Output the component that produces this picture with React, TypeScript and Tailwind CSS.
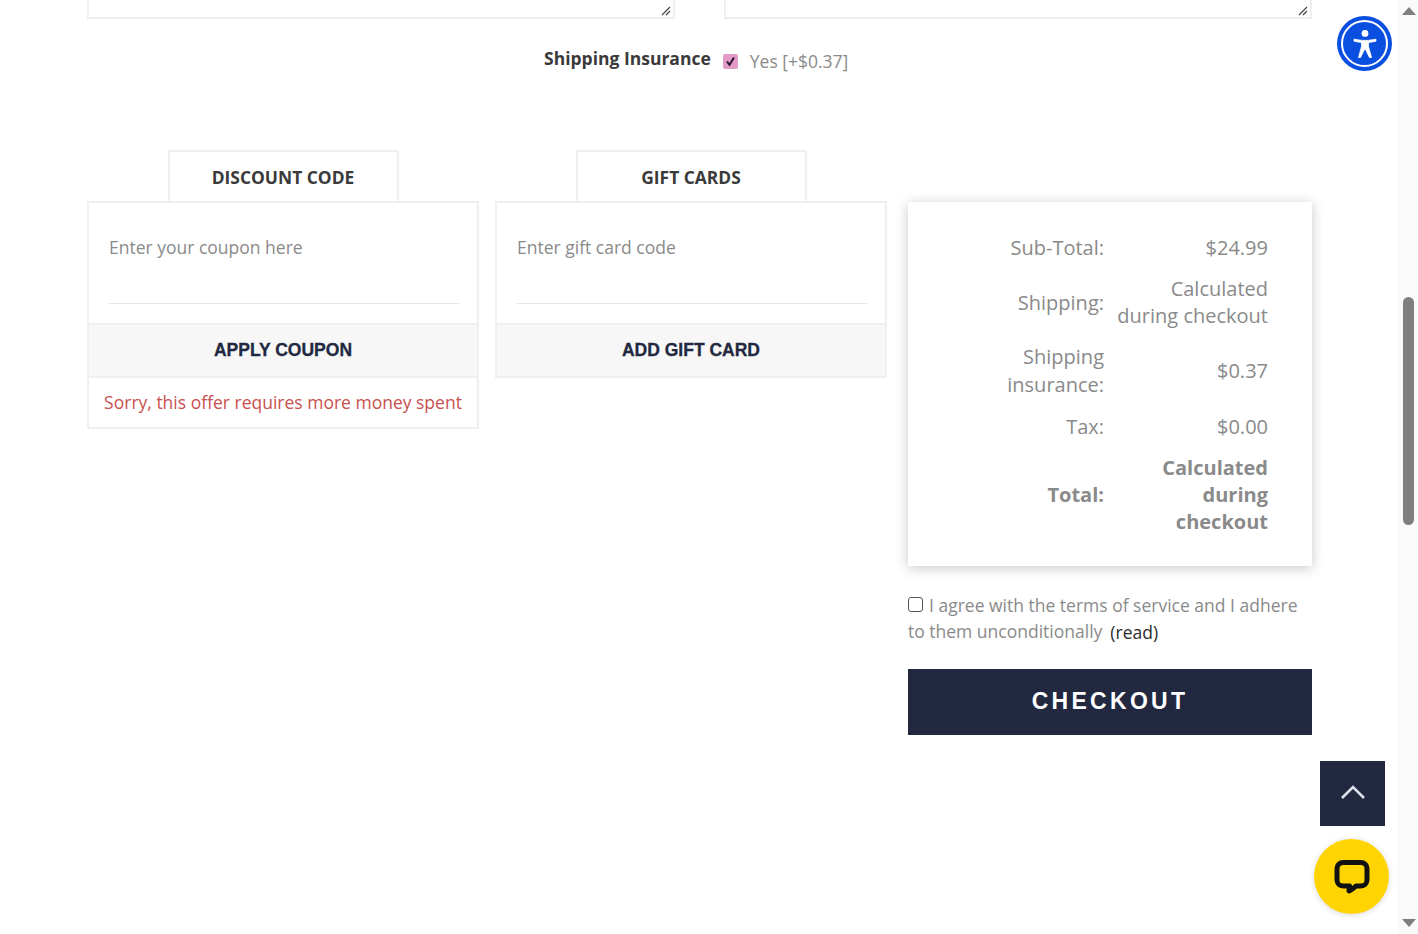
const font = "font-['Open_Sans',sans-serif]";

const CodeBox = ({
  tab,
  placeholder,
  action,
  error,
}: {
  tab: string;
  placeholder: string;
  action: string;
  error?: string;
}) => (
  <div className="w-[392px] flex flex-col items-center">
    <div className="w-[231px] h-[52px] -mb-px pt-[1px] flex items-center justify-center border-2 border-b-0 border-[#efefef] text-[17.4px] font-bold text-[#3a3a3a]">
      {tab}
    </div>
    <div className="w-full border-2 border-[#efefef] bg-white">
      <div className="h-[120px] pl-[20px] pr-[18px] pt-[30px]">
        <div className="h-[71px] border-b border-[#e4e4e4] text-[17.5px] leading-[28px] text-[#8a8a8a]">
          {placeholder}
        </div>
      </div>
      <div className="h-[53px] flex items-center justify-center bg-[#f7f7f8] border-t-2 border-[#efefef] font-['Liberation_Sans',sans-serif] font-bold text-[17.5px] [-webkit-text-stroke:0.3px_#212840] text-[#212840]">
        {action}
      </div>
      {error && (
        <div className="h-[51px] flex items-center justify-center border-t-2 border-[#efefef] text-[17.5px] text-[#c9504f]">
          {error}
        </div>
      )}
    </div>
  </div>
);

const SummaryRow = ({
  label,
  value,
  bold,
  className,
}: {
  label: React.ReactNode;
  value: React.ReactNode;
  bold?: boolean;
  className?: string;
}) => (
  <div
    className={`flex items-center text-[20px] text-[#8a8a8a] ${
      bold ? "font-bold" : ""
    } ${className ?? "leading-[27px]"}`}
  >
    <div className="w-[196px] text-right">{label}</div>
    <div className="w-[164px] text-right">{value}</div>
  </div>
);

export default function App() {
  return (
    <div className={`relative h-[934px] w-[1418px] overflow-hidden bg-white ${font}`}>
      <div className="w-[1397px] pl-[87px] pr-[85px]">
        <div className="flex justify-between">
          {[0, 1].map((i) => (
            <div
              key={i}
              className="relative h-[19px] w-[588px] border-2 border-t-0 border-[#efefef]"
            >
              <svg
                className="absolute right-[2px] bottom-[1px]"
                width="10"
                height="10"
                viewBox="0 0 10 10"
              >
                <path d="M1 9 L9 1 M5 9 L9 5" stroke="#444" strokeWidth="1.2" />
              </svg>
            </div>
          ))}
        </div>

        <div className="h-[131px] flex items-start pl-[457px] pt-[26px]">
          <span className="text-[17.5px] leading-[26px] font-bold text-[#3a3a3a]">
            Shipping Insurance
          </span>
          <span className="ml-[12px] mt-[9px] w-[15px] h-[15px] flex items-center justify-center rounded-[2px] bg-[#e29ac6]">
            <svg width="11" height="11" viewBox="0 0 11 11">
              <path d="M2 5.5 L4.5 8.8 L9 1.5" fill="none" stroke="#2a1438" strokeWidth="2" />
            </svg>
          </span>
          <span className="ml-[12px] mt-[3px] text-[17.5px] leading-[26px] text-[#8a8a8a]">
            Yes [+$0.37]
          </span>
        </div>

        <div className="flex">
          <CodeBox
            tab="DISCOUNT CODE"
            placeholder="Enter your coupon here"
            action="APPLY COUPON"
            error="Sorry, this offer requires more money spent"
          />
          <div className="ml-[16px]">
            <CodeBox
              tab="GIFT CARDS"
              placeholder="Enter gift card code"
              action="ADD GIFT CARD"
            />
          </div>

          <div className="ml-[21px] mt-[52px] w-[404px]">
            <div className="h-[364px] pt-[32px] bg-white shadow-[0_2px_12px_rgba(0,0,0,0.22)]">
              <SummaryRow label="Sub-Total:" value="$24.99" />
              <SummaryRow
                className="mt-[14px] leading-[27px]"
                label="Shipping:"
                value={
                  <>
                    Calculated
                    <br />
                    during checkout
                  </>
                }
              />
              <SummaryRow
                className="mt-[13.5px] leading-[28px]"
                label={
                  <>
                    Shipping
                    <br />
                    insurance:
                  </>
                }
                value="$0.37"
              />
              <SummaryRow className="mt-[14.5px] leading-[27px]" label="Tax:" value="$0.00" />
              <SummaryRow
                bold
                className="mt-[14px] leading-[27px]"
                label="Total:"
                value={
                  <>
                    Calculated
                    <br />
                    during
                    <br />
                    checkout
                  </>
                }
              />
            </div>

            <div className="mt-[26px] text-[17.5px] leading-[26px] text-[#8a8a8a]">
              <div className="flex items-center">
                <span className="w-[15px] h-[15px] mb-[2px] mr-[6px] rounded-[3px] border border-[#555] bg-white" />
                I agree with the terms of service and I adhere
              </div>
              <div className="flex items-center -mt-px">
                to them unconditionally
                <span className="ml-[8px] mt-[2px] text-[#2b2b2b]">(read)</span>
              </div>
            </div>

            <button className="mt-[24px] w-full h-[66px] pb-[2px] bg-[#212840] text-white font-['Liberation_Sans',sans-serif] font-bold text-[23px] tracking-[3.3px]">
              CHECKOUT
            </button>
          </div>
        </div>
      </div>

      {/* scrollbar */}
      <div className="absolute right-0 top-0 h-full w-[21px] bg-[#fafafa]">
        <div className="absolute left-[5px] top-[7px] w-0 h-0 border-x-[7px] border-x-transparent border-b-[8px] border-b-[#7f7f7f]" />
        <div className="absolute left-[6px] top-[297px] h-[228px] w-[11px] rounded-full bg-[#7f7f7f]" />
        <div className="absolute left-[5px] bottom-[7px] w-0 h-0 border-x-[7px] border-x-transparent border-t-[8px] border-t-[#7f7f7f]" />
      </div>

      {/* accessibility widget */}
      <div className="absolute left-[1337px] top-[16px] w-[55px] h-[55px] rounded-full bg-[#0b4fe0] flex items-center justify-center">
        <div className="w-[47px] h-[47px] rounded-full border-2 border-white flex items-center justify-center">
          <svg width="24" height="28" viewBox="0 0 24 28">
            <circle cx="12" cy="3.4" r="3.4" fill="#fff" />
            <path
              d="M1 9.2 L9 10.4 H15 L23 9.2 V11.2 L15.5 12.6 V16.5 L18.5 27.5 H16.5 L12 18.5 L7.5 27.5 H5.5 L8.5 16.5 V12.6 L1 11.2 Z"
              fill="#fff"
              stroke="#fff"
              strokeWidth="0.8"
              strokeLinejoin="round"
            />
          </svg>
        </div>
      </div>

      {/* back to top */}
      <div className="absolute left-[1320px] top-[761px] w-[65px] h-[65px] bg-[#212840] flex items-center justify-center pb-[4px]">
        <svg width="26" height="16" viewBox="0 0 26 16">
          <path d="M2 14 L13 3 L24 14" fill="none" stroke="#dfe2ec" strokeWidth="2.6" />
        </svg>
      </div>

      {/* chat */}
      <div className="absolute left-[1314px] top-[839px] w-[75px] h-[75px] rounded-full bg-[#ffd400] shadow-[0_1px_6px_rgba(0,0,0,0.15)] flex items-center justify-center">
        <svg width="36" height="36" viewBox="0 0 36 36">
          <path
            d="M9 3.5 H27 A6 6 0 0 1 33 9.5 V21 A6 6 0 0 1 27 27 H22 Q19 30 15 32 L15.5 27 H9 A6 6 0 0 1 3 21 V9.5 A6 6 0 0 1 9 3.5 Z"
            fill="none"
            stroke="#111"
            strokeWidth="5"
            strokeLinejoin="round"
          />
        </svg>
      </div>
    </div>
  );
}
